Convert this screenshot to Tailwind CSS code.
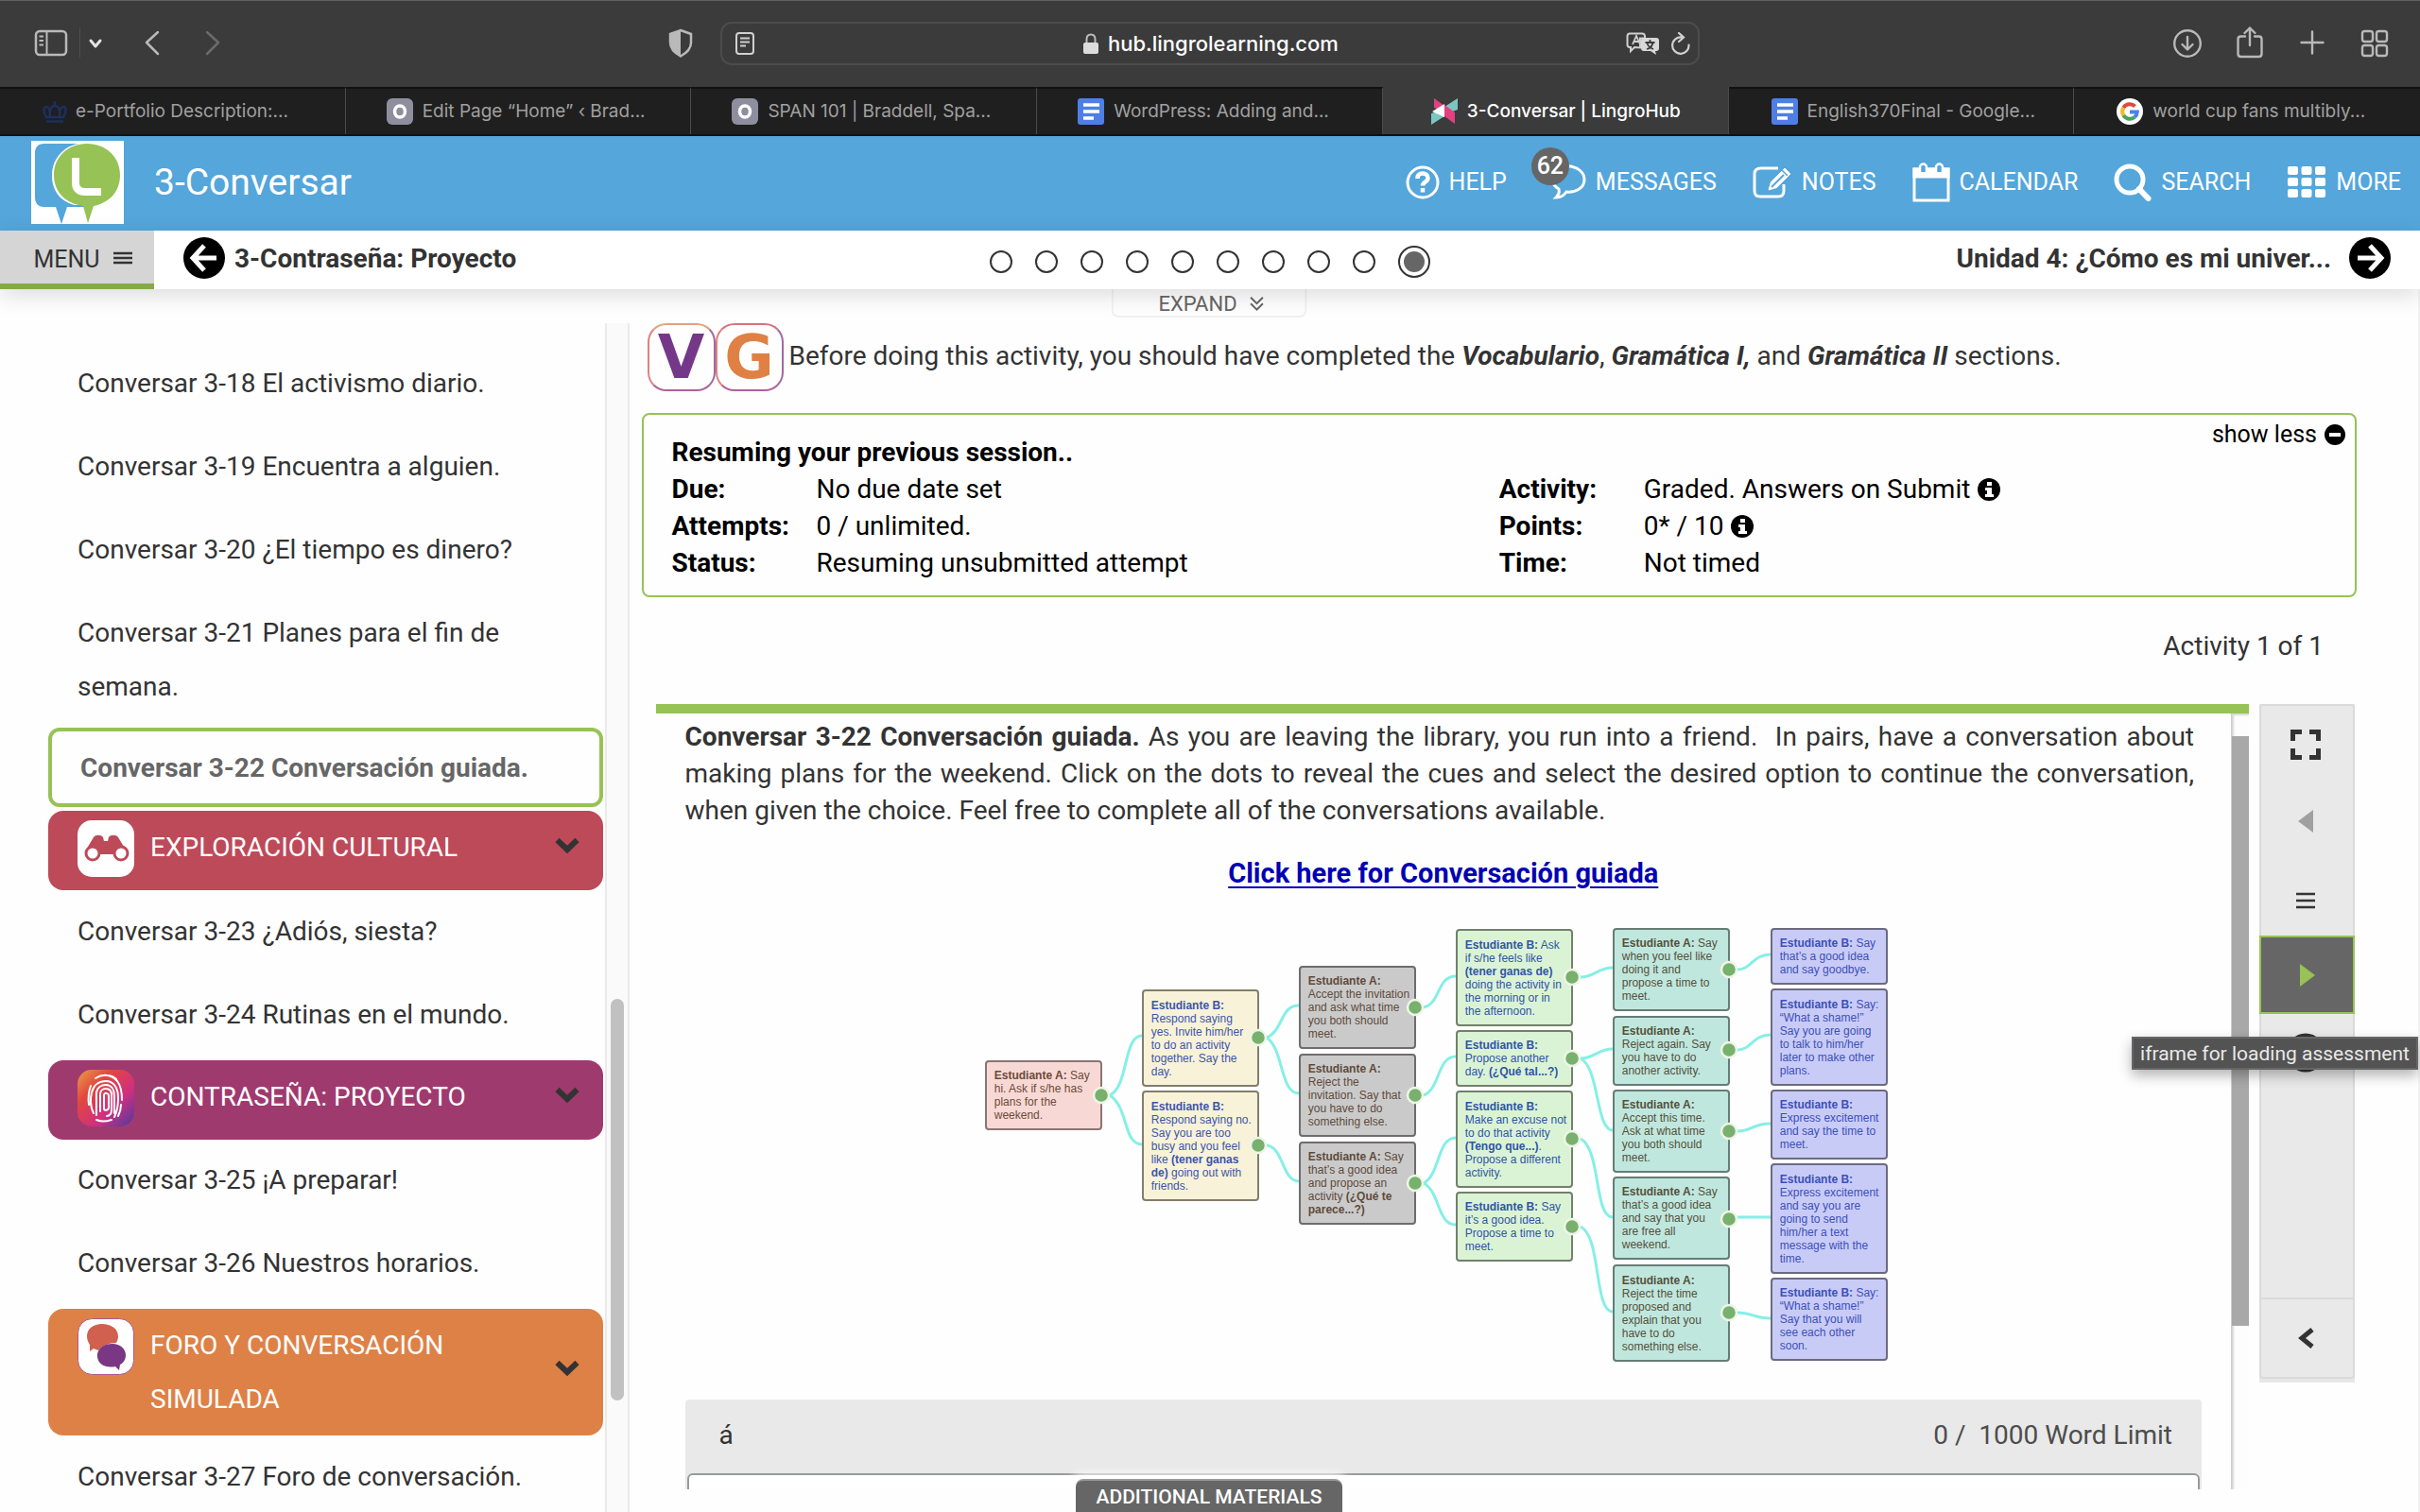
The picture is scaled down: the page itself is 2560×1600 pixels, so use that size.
<!DOCTYPE html>
<html lang="en">
<head>
<meta charset="utf-8">
<meta name="viewport" content="width=device-width, initial-scale=1">
<title>3-Conversar | LingroHub</title>
<script src="https://cdn.jsdelivr.net/npm/@tailwindcss/browser@4"></script>
</head>
<body class="flex h-screen flex-col overflow-hidden bg-[#fefefe] font-['Roboto',sans-serif] text-[28px] leading-[39px] text-[#333333]">

<!-- Browser toolbar -->
<div class="flex h-[92px] shrink-0 items-start justify-between border-t border-[#606060] bg-[#3b3b3b] font-['Inter',sans-serif] text-[#b9b9b9]">
  <div class="flex h-[90px] flex-1 items-start pt-[28px]">
    <button aria-label="Sidebar" class="ml-[36px]"><svg class="h-8 w-9" viewBox="0 0 36 32" fill="none" stroke="currentColor" stroke-width="2.5"><rect x="2" y="4" width="32" height="25" rx="4"/><path d="M13.500 4v25M5.500 9.500h4.500M5.500 14h4.500M5.500 18.500h4.500" stroke-width="2"/></svg></button>
    <div class="ml-3 h-8 w-px bg-[#4d4d4d]"></div>
    <button aria-label="Tab groups" class="ml-2"><svg class="h-8 w-4" viewBox="0 0 16 32" fill="none" stroke="#e4e4e4" stroke-width="3" stroke-linecap="round" stroke-linejoin="round"><path d="M3 14l5 6 5-6"/></svg></button>
    <button aria-label="Back" class="ml-[43px]"><svg class="h-8 w-5" viewBox="0 0 20 32" fill="none" stroke="currentColor" stroke-width="2.5" stroke-linecap="round" stroke-linejoin="round"><path d="M15 5L3 16l12 12"/></svg></button>
    <button aria-label="Forward" class="ml-[42px]"><svg class="h-8 w-5" viewBox="0 0 20 32" fill="none" stroke="#6b6b6b" stroke-width="2.500" stroke-linecap="round" stroke-linejoin="round"><path d="M5 5l12 11L5 28"/></svg></button>
    <button aria-label="Privacy report" class="mr-7 ml-auto"><svg class="h-8 w-7" viewBox="0 0 28 32"><path d="M14 3l11 4v9c0 7-4.500 11-11 14.500C7.500 27 3 23 3 16V7z" fill="none" stroke="currentColor" stroke-width="2.500"/><path d="M14 3v27.500C7.500 27 3 23 3 16V7z" fill="currentColor"/></svg></button>
  </div>
  <div class="mt-[22px] flex h-[46px] w-[1036px] items-center justify-between rounded-xl border-2 border-[#4c4c4c] pr-1.5 pl-3 text-[#e6e6e6]">
    <button aria-label="Reader"><svg class="h-6 w-6" viewBox="0 0 24 24" fill="none" stroke="#d0d0d0" stroke-width="2"><rect x="3" y="1" width="18" height="22" rx="3"/><path d="M7 6.500h10M7 10.500h10M7 14.500h6"/></svg></button>
    <label class="flex items-center gap-2 pl-15"><svg class="h-6 w-5" viewBox="0 0 20 24"><rect x="2" y="11" width="16" height="12" rx="2" fill="#dcdcdc"/><path d="M5.500 11V7.500C5.500 4.500 7 2.500 10 2.500s4.500 2 4.500 5V11" fill="none" stroke="#bcbcbc" stroke-width="2"/></svg><input aria-label="Address" class="w-[264px] bg-transparent text-[22px] leading-[30px] font-medium text-white" value="hub.lingrolearning.com"></label>
    <div class="flex items-center gap-2.5">
      <button aria-label="Translate"><svg class="h-6 w-9" viewBox="0 0 36 24"><path d="M4 1.500h13c2 0 3 1 3 3v2h-5v10l-6-.500-4 4v-4H4c-2 0-2.500-1-2.500-3V4.500c0-2 .500-3 2.500-3z" fill="none" stroke="#d0d0d0" stroke-width="2"/><path d="M7 13l4-9 3.500 8M8.500 10h5" fill="none" stroke="#d0d0d0" stroke-width="1.800"/><path d="M19 6h13c2 0 3 1 3 3v8c0 2-1 3-3 3h-1l1 4-6-4h-7c-2 0-3-1-3-3V9c0-2 1-3 3-3z" fill="#d8d8d8"/><path d="M25.500 8v3M20.500 11h10M22 18c4-1 6-4 6.500-7M22.500 12c1 3 4 5 6.500 6" fill="none" stroke="#3b3b3b" stroke-width="1.800"/></svg></button>
      <button aria-label="Reload"><svg class="h-6 w-6" viewBox="0 0 24 24" fill="none" stroke="#d0d0d0" stroke-width="2.200" stroke-linecap="round"><path d="M20.500 13.500A8.700 8.700 0 1 1 13 5.500M10 1l5 4.500-5 4.500"/></svg></button>
    </div>
  </div>
  <div class="flex flex-1 items-start justify-end gap-7 pt-[26px]">
    <button aria-label="Downloads" class="mr-1"><svg class="h-9 w-9" viewBox="0 0 36 36" fill="none" stroke="currentColor" stroke-width="2.400" stroke-linecap="round" stroke-linejoin="round"><circle cx="18" cy="19" r="13.800"/><path d="M18 12v13M12.500 20l5.500 5.500 5.500-5.500"/></svg></button>
    <button aria-label="Share" class="mr-1.5"><svg class="h-9 w-8" viewBox="0 0 32 36" fill="none" stroke="currentColor" stroke-width="2.400" stroke-linecap="round" stroke-linejoin="round"><path d="M11 11.500H6.500c-2 0-3 1-3 3V30c0 2 1 3 3 3h19c2 0 3-1 3-3V14.500c0-2-1-3-3-3H21M16 21V2.500M10.500 8L16 2.500 21.500 8"/></svg></button>
    <button aria-label="New tab" class="mr-1.5"><svg class="h-9 w-8" viewBox="0 0 32 36" fill="none" stroke="currentColor" stroke-width="2.400" stroke-linecap="round"><path d="M16 6.500v23M4.500 18h23"/></svg></button>
    <button aria-label="Tab overview" class="mr-8"><svg class="h-9 w-8" viewBox="0 0 32 36" fill="none" stroke="currentColor" stroke-width="2.400"><rect x="3" y="6" width="11" height="11" rx="2.500"/><rect x="18" y="6" width="11" height="11" rx="2.500"/><rect x="3" y="21" width="11" height="11" rx="2.500"/><rect x="18" y="21" width="11" height="11" rx="2.500"/></svg></button>
  </div>
</div>

<!-- Tab strip -->
<nav aria-label="Tabs" class="grid h-[52px] shrink-0 grid-cols-7 border-b-2 border-[#111111] bg-[#1f1f1f] font-['Inter',sans-serif] text-[19px] leading-[28px] text-[#a0a0a0]">
  <a href="#" class="flex items-center gap-2 border-t-2 border-r border-t-[#111111] border-r-[#4a4a4a] pl-11 whitespace-nowrap"><svg class="h-7 w-7" viewBox="0 0 28 28" fill="none" stroke="#1d2f5e" stroke-width="2.500"><path d="M5 20C1 14 2 9 5 9s4 4 4 10c-1-7 1-11 5-11s6 4 5 11c0-6 1-10 4-10s4 5 0 11zM5 24.500h18M14 8V3"/></svg>e-Portfolio Description:...</a>
  <a href="#" class="flex items-center gap-2.5 border-t-2 border-r border-t-[#111111] border-r-[#4a4a4a] pl-[43px] whitespace-nowrap"><svg class="h-7 w-7" viewBox="0 0 28 28"><rect width="28" height="28" rx="6" fill="#8f8e9e"/><ellipse cx="14" cy="14" rx="5.500" ry="6" fill="none" stroke="#fff" stroke-width="3.500"/></svg>Edit Page “Home” ‹ Brad...</a>
  <a href="#" class="flex items-center gap-2.5 border-t-2 border-r border-t-[#111111] border-r-[#4a4a4a] pl-[43px] whitespace-nowrap"><svg class="h-7 w-7" viewBox="0 0 28 28"><rect width="28" height="28" rx="6" fill="#8f8e9e"/><ellipse cx="14" cy="14" rx="5.500" ry="6" fill="none" stroke="#fff" stroke-width="3.500"/></svg>SPAN 101 | Braddell, Spa...</a>
  <a href="#" class="flex items-center gap-2.5 border-t-2 border-r border-t-[#111111] border-r-[#4a4a4a] pl-[43px] whitespace-nowrap"><svg class="h-7 w-7" viewBox="0 0 28 28"><rect width="28" height="28" rx="3" fill="#4f7fe6"/><path d="M6 7h17M6 14h17M6 21h11" stroke="#fff" stroke-width="3.500"/></svg>WordPress: Adding and...</a>
  <a href="#" aria-current="page" class="flex items-center gap-2.5 border-r border-[#4a4a4a] bg-[#3b3b3b] pt-0.5 pl-[51px] font-medium whitespace-nowrap text-white"><svg class="h-7 w-7" viewBox="0 0 28 28"><path d="M3 0l11 8v6L3 10z" fill="#e2407f"/><path d="M28 0L14 9v8l14-5z" fill="#7cc5c0"/><path d="M0 28l14-9v-7L0 16z" fill="#7cc5c0"/><path d="M25 27l-11-8V7l11 8z" fill="#e2407f"/><path d="M1 14l13-8v14z" fill="#fff"/></svg>3-Conversar | LingroHub</a>
  <a href="#" class="flex items-center gap-2.5 border-t-2 border-r border-t-[#111111] border-r-[#4a4a4a] pl-[45px] whitespace-nowrap"><svg class="h-7 w-7" viewBox="0 0 28 28"><rect width="28" height="28" rx="3" fill="#4f7fe6"/><path d="M6 7h17M6 14h17M6 21h11" stroke="#fff" stroke-width="3.500"/></svg>English370Final - Google...</a>
  <a href="#" class="flex items-center gap-2.5 border-t-2 border-t-[#111111] pl-[45px] whitespace-nowrap"><svg class="h-7 w-7" viewBox="0 0 28 28" fill="none" stroke-width="4"><circle cx="14" cy="14" r="14" fill="#fff"/><path d="M19.500 8.500A7.800 7.800 0 0 0 7.300 10" stroke="#dd4b3e"/><path d="M7.300 10a7.800 7.800 0 0 0 0 8" stroke="#f2b92c"/><path d="M7.300 18a7.800 7.800 0 0 0 11.700 2" stroke="#4ba35a"/><path d="M19 20a7.800 7.800 0 0 0 2.800-5.500H14" stroke="#4c82e8"/></svg>world cup fans multibly...</a>
</nav>

<!-- Site header -->
<header class="flex h-[100px] shrink-0 items-center bg-[#54a6db] pb-[3px] pl-[33px] text-white">
  <a href="#" aria-label="Lingro home"><svg class="h-[88px] w-[98px]" viewBox="0 0 98 88"><rect width="98" height="88" fill="#fff"/><path d="M14 3h45v67H38l-6 18-6-18H14C6 70 4 65 4 59V13C4 7 7 3 14 3z" fill="#54a6db"/><path d="M59 2C37 2 22 17 22 37c0 16 9 27 24 31h10l4 18 6-18c18-4 29-16 29-32C95 16 80 2 59 2z" fill="#fff"/><path d="M59 3c20 0 35 14 35 33 0 17-10 29-28 33l-6 18-5-18C36 66 24 54 24 36 24 17 39 3 59 3z" fill="#97c255"/><path d="M47 18v27c0 6 4 9 10 9h17" fill="none" stroke="#fff" stroke-width="8"/></svg></a>
  <h1 class="ml-[32px] text-[39px] leading-[44px]">3-Conversar</h1>
  <nav aria-label="Site" class="ml-auto flex items-center gap-[38px] pr-5 text-[25px] leading-[30px]">
    <a href="#" class="-mr-3 flex items-center gap-2.5"><svg class="h-9 w-9" viewBox="0 0 36 36" fill="none" stroke="#fff"><circle cx="18" cy="18" r="16" stroke-width="3"/><path d="M12.500 14c0-4 2.500-5.500 5.500-5.500s5.500 1.800 5.500 5c0 4-5.500 4-5.500 8" stroke-width="4.500"/><path d="M18 24v4.500" stroke-width="4.500"/></svg>HELP</a>
    <a href="#" class="relative flex items-center gap-2.5 pl-[18px]"><svg class="h-10 w-10" viewBox="0 0 40 40" fill="none" stroke="#fff" stroke-width="3"><path d="M24 3c8 2 14 7 14 14 0 9-9 14-19 13-2 3-6 6-11 6 3-3 4-5 3-9-5-3-7-6-7-10C4 9 12 3 20 3z"/></svg>MESSAGES<span class="absolute top-[-17px] left-0 flex h-10 w-10 items-center justify-center rounded-full bg-[#666666] font-medium">62</span></a>
    <a href="#" class="flex items-center gap-2.5"><svg class="h-10 w-[42px]" viewBox="0 0 42 40" fill="none" stroke="#fff" stroke-width="3"><path d="M27 5H9C4 5 2 7 2 11v18c0 4 2 6 6 6h19c4 0 6-2 6-6v-7"/><path d="M17 28l2.500-8.500L34 5l6 6-14.500 14.500z" fill="#fff" stroke-width="1"/><path d="M20 25l13-13" stroke="#54a6db" stroke-width="2"/><path d="M31 7l6 6" stroke="#54a6db" stroke-width="1.500"/></svg>NOTES</a>
    <a href="#" class="flex items-center gap-2.5"><svg class="h-11 w-[40px]" viewBox="0 0 40 44" fill="none" stroke="#fff" stroke-width="3"><path d="M2 8h36v33H2z"/><path d="M2 8h36v8H2z" fill="#fff"/><path d="M8 11V6a3.500 3.500 0 0 1 7 0v5M25 11V6a3.500 3.500 0 0 1 7 0v5" stroke-width="2.500" fill="#54a6db"/></svg>CALENDAR</a>
    <a href="#" class="flex items-center gap-2.5"><svg class="h-10 w-10" viewBox="0 0 40 40" fill="none" stroke="#fff"><circle cx="17" cy="17" r="14" stroke-width="5"/><path d="M27 27l9.500 10" stroke-width="6" stroke-linecap="round"/></svg>SEARCH</a>
    <button class="flex items-center gap-2.5"><svg class="h-9 w-[42px]" viewBox="0 0 42 36" fill="#fff"><rect x="1" y="1" width="11" height="9" rx="2"/><rect x="15.500" y="1" width="11" height="9" rx="2"/><rect x="30" y="1" width="11" height="9" rx="2"/><rect x="1" y="13" width="11" height="9" rx="2"/><rect x="15.500" y="13" width="11" height="9" rx="2"/><rect x="30" y="13" width="11" height="9" rx="2"/><rect x="1" y="25" width="11" height="9" rx="2"/><rect x="15.500" y="25" width="11" height="9" rx="2"/><rect x="30" y="25" width="11" height="9" rx="2"/></svg>MORE</button>
  </nav>
</header>

<!-- Lesson bar -->
<div class="relative z-10 grid h-[62px] shrink-0 grid-cols-[1fr_auto_1fr] bg-white shadow-[0_6px_24px_rgba(0,0,0,0.14)]">
  <div class="flex items-stretch">
    <button class="flex w-[163px] items-center justify-center gap-3.5 border-b-6 border-[#84ab47] bg-[#d5d5d5] pt-1 pl-3 text-[25px]">MENU<svg class="h-5 w-5" viewBox="0 0 20 20" stroke="#333" stroke-width="2.500"><path d="M0 4h20M0 9h20M0 14h20"/></svg></button>
    <a href="#" class="mb-1 ml-[31px] flex items-center gap-2.5 font-bold"><svg class="h-11 w-11" viewBox="0 0 44 44"><circle cx="22" cy="22" r="22" fill="#000"/><path d="M22 9L10 22l12 13M10 22h25" fill="none" stroke="#fff" stroke-width="5"/></svg>3-Contraseña: Proyecto</a>
  </div>
  <div class="flex items-center gap-6 pt-1">
    <button aria-label="Page 1" class="h-6 w-6 rounded-full border-2 border-[#333333]"></button>
    <button aria-label="Page 2" class="h-6 w-6 rounded-full border-2 border-[#333333]"></button>
    <button aria-label="Page 3" class="h-6 w-6 rounded-full border-2 border-[#333333]"></button>
    <button aria-label="Page 4" class="h-6 w-6 rounded-full border-2 border-[#333333]"></button>
    <button aria-label="Page 5" class="h-6 w-6 rounded-full border-2 border-[#333333]"></button>
    <button aria-label="Page 6" class="h-6 w-6 rounded-full border-2 border-[#333333]"></button>
    <button aria-label="Page 7" class="h-6 w-6 rounded-full border-2 border-[#333333]"></button>
    <button aria-label="Page 8" class="h-6 w-6 rounded-full border-2 border-[#333333]"></button>
    <button aria-label="Page 9" class="h-6 w-6 rounded-full border-2 border-[#333333]"></button>
    <button aria-label="Page 10" class="flex h-[34px] w-[34px] items-center justify-center rounded-full border-2 border-[#333333]"><span class="h-[22px] w-[22px] rounded-full bg-[#666666]"></span></button>
  </div>
  <a href="#" class="mr-[31px] mb-1 flex items-center justify-end gap-[19px] font-bold">Unidad 4: ¿Cómo es mi univer...<svg class="h-11 w-11" viewBox="0 0 44 44"><circle cx="22" cy="22" r="22" fill="#000"/><path d="M22 9l12 13-12 13M34 22H9" fill="none" stroke="#fff" stroke-width="5"/></svg></a>
</div>

<div class="relative flex min-h-0 flex-1 border-r-2 border-[#f3f3f3] pt-9">
  <button class="absolute top-0 left-1/2 flex h-[30px] w-[207px] -translate-x-1/2 items-center justify-center gap-3 rounded-b-lg border-2 border-t-0 border-[#f0f0f0] pt-1 pl-1.5 text-[22px] leading-[24px] text-[#666666]">EXPAND<svg class="h-4 w-[18px]" viewBox="0 0 20 20" fill="none" stroke="#666" stroke-width="2.500"><path d="M2 1l8 8 8-8M2 9l8 8 8-8"/></svg></button>

  <!-- Table of contents -->
  <aside class="flex w-1/4 shrink-0 overflow-hidden">
    <ul class="min-w-0 flex-1 pt-5 pr-0.5 pl-[51px] leading-[57px]">
      <li class="pt-[15px] pb-4 pl-[31px]"><a href="#">Conversar 3-18 El activismo diario.</a></li>
      <li class="pt-[15px] pb-4 pl-[31px]"><a href="#">Conversar 3-19 Encuentra a alguien.</a></li>
      <li class="pt-[15px] pb-4 pl-[31px]"><a href="#">Conversar 3-20 ¿El tiempo es dinero?</a></li>
      <li class="pt-[15px] pb-[15px] pl-[31px]"><a href="#">Conversar 3-21 Planes para el fin de<br>semana.</a></li>
      <li class="flex h-[84px] items-center rounded-xl border-4 border-[#97c255] pl-[30px] font-bold text-[#666666]"><a href="#" aria-current="true">Conversar 3-22 Conversación guiada.</a></li>
      <li class="mt-1"><button class="flex h-[84px] w-full items-center rounded-2xl bg-[#bd4a59] pt-2.5 pr-[24px] pb-[14px] pl-[31px] text-left text-white"><svg class="mr-[17px] h-[60px] w-[60px]" viewBox="0 0 60 60"><rect width="60" height="60" rx="15" fill="#fff"/><path d="M8 33l9-15c2-3 8-3 10 0l1 4h4l1-4c2-3 8-3 10 0l9 15v3H8z" fill="#bd4a59"/><circle cx="16" cy="35" r="7" fill="#fff" stroke="#bd4a59" stroke-width="3"/><circle cx="46" cy="35" r="7" fill="#fff" stroke="#bd4a59" stroke-width="3"/><path d="M25 36l3-4h6l3 4z" fill="#bd4a59"/></svg><span class="flex-1 pb-1">EXPLORACIÓN CULTURAL</span><svg class="mb-1.5 h-5 w-7" viewBox="0 0 28 20" fill="none" stroke="#333" stroke-width="6"><path d="M3.500 4L14 14 24.500 4"/></svg></button></li>
      <li class="pt-[15px] pb-4 pl-[31px]"><a href="#">Conversar 3-23 ¿Adiós, siesta?</a></li>
      <li class="pt-[15px] pb-4 pl-[31px]"><a href="#">Conversar 3-24 Rutinas en el mundo.</a></li>
      <li class="mt-1"><button class="flex h-[84px] w-full items-center rounded-2xl bg-[#9f3a6f] pt-2.5 pr-[24px] pb-[14px] pl-[31px] text-left text-white"><svg class="mr-[17px] h-[60px] w-[60px]" viewBox="0 0 60 60"><defs><linearGradient id="fp" x1="0" y1="0" x2="1" y2="1"><stop offset="0" stop-color="#eaa047"/><stop offset=".3" stop-color="#e2473f"/><stop offset=".65" stop-color="#cf2f80"/><stop offset="1" stop-color="#4a3aa0"/></linearGradient></defs><rect width="60" height="60" rx="15" fill="url(#fp)"/><g fill="none" stroke="#fff" stroke-width="2" stroke-linecap="round"><path d="M19 9c8-5 17-4 23 3 4 5 5 12 5 20M31 6c4 0 7 1 10 4M14 17c-2 5-3 12-2 20"/><path d="M17 46c-3-6-4-14-2-22 2-8 8-12 15-12 9 0 13 8 13 18 0 8-1 14-4 20"/><path d="M20 48V24c1-5 5-8 10-8 6 0 9 5 9 12v18"/><path d="M24 44V26c0-4 3-6 6-6 4 0 6 3 6 7v16c0 3-2 6-5 6"/><path d="M28 41V27c0-3 5-3 5 1v12c0 3-5 4-5 1M20 53c4 2 10 2 16 0M46 37c0 5-1 8-3 12"/></g></svg><span class="flex-1 pb-1">CONTRASEÑA: PROYECTO</span><svg class="mb-1.5 h-5 w-7" viewBox="0 0 28 20" fill="none" stroke="#333" stroke-width="6"><path d="M3.500 4L14 14 24.500 4"/></svg></button></li>
      <li class="pt-[14px] pb-4 pl-[31px]"><a href="#">Conversar 3-25 ¡A preparar!</a></li>
      <li class="pt-[15px] pb-4 pl-[31px]"><a href="#">Conversar 3-26 Nuestros horarios.</a></li>
      <li class="mt-1"><button class="flex w-full items-center rounded-2xl bg-[#de8146] py-2.5 pr-[24px] pl-[31px] text-left text-white"><svg class="mr-[17px] h-[60px] w-[60px] self-start" viewBox="0 0 60 60"><rect x=".500" y=".500" width="59" height="59" rx="15" fill="#fff" stroke="#b05a8c"/><path d="M26 6c9 0 17 5 17 13 0 3-1 5-2 7-8 0-15 3-19 8l-5-2-4 3v-7c-2-3-3-6-3-9 0-8 7-13 16-13z" fill="#d2604e"/><path d="M37 27c8 0 14 5 14 12 0 4-2 8-6 10l-1 6-4-4c-10 2-18-2-19-10-1-8 6-14 16-14z" fill="#7a3783"/></svg><span class="flex-1">FORO Y CONVERSACIÓN<br>SIMULADA</span><svg class="mb-2 h-5 w-7" viewBox="0 0 28 20" fill="none" stroke="#333" stroke-width="6"><path d="M3.500 4L14 14 24.500 4"/></svg></button></li>
      <li class="pt-[15px] pb-4 pl-[31px] whitespace-nowrap"><a href="#">Conversar 3-27 Foro de conversación.</a></li>
    </ul>
  </aside>
  <div class="flex w-[26px] shrink-0 flex-col items-center border-x-2 border-[#eaeaea] bg-[#fafafa] pt-[715px]">
    <div class="h-[425px] w-3.5 rounded-full bg-[#c1c1c1]"></div>
  </div>

  <!-- Activity -->
  <main class="flex min-w-0 flex-1 flex-col pr-[65px] pl-[13px]">
    <div class="flex h-[72px] items-center pl-1.5 font-['DejaVu_Sans',sans-serif] text-[64px] leading-[72px] font-bold">
      <span class="flex h-[72px] w-[72px] items-center justify-center rounded-[20px] border-2 border-t-[#e3a277] border-r-[#a06aa0] border-b-[#b0609a] border-l-[#e08080] text-[#753888]">V</span>
      <span class="flex h-[72px] w-[72px] items-center justify-center rounded-[20px] border-2 border-t-[#d87078] border-r-[#a06aa0] border-b-[#b0609a] border-l-[#e08080] text-[#df8145]">G</span>
      <p class="ml-1.5 pb-1 font-['Roboto',sans-serif] text-[28px] leading-[39px] font-normal whitespace-nowrap">Before doing this activity, you should have completed the <b><i>Vocabulario</i></b>, <b><i>Gramática I,</i></b> and <b><i>Gramática II</i></b> sections.</p>
    </div>

    <section class="relative mt-[23px] rounded-lg border-2 border-[#97c255] px-[30px] pt-5 pb-[15px] text-black">
      <h2 class="font-bold">Resuming your previous session..</h2>
      <button class="absolute top-1 right-2.5 flex items-center gap-2 text-[25px] leading-[34px]">show less<svg class="h-[22px] w-[22px]" viewBox="0 0 22 22"><circle cx="11" cy="11" r="11"/><path d="M5 11h12" stroke="#fff" stroke-width="4"/></svg></button>
      <div class="grid grid-cols-2">
        <dl class="grid grid-cols-[153px_1fr]">
          <dt class="font-bold">Due:</dt><dd>No due date set</dd>
          <dt class="font-bold">Attempts:</dt><dd>0 / unlimited.</dd>
          <dt class="font-bold">Status:</dt><dd>Resuming unsubmitted attempt</dd>
        </dl>
        <dl class="grid grid-cols-[153px_1fr]">
          <dt class="font-bold">Activity:</dt><dd class="flex items-center gap-2">Graded. Answers on Submit<svg class="h-6 w-6" viewBox="0 0 24 24"><circle cx="12" cy="12" r="12"/><path d="M10 4h5v4h-5zM8 10h7v7h2v3H8v-3h2v-4H8z" fill="#fff"/></svg></dd>
          <dt class="font-bold">Points:</dt><dd class="flex items-center gap-2">0* / 10<svg class="h-6 w-6" viewBox="0 0 24 24"><circle cx="12" cy="12" r="12"/><path d="M10 4h5v4h-5zM8 10h7v7h2v3H8v-3h2v-4H8z" fill="#fff"/></svg></dd>
          <dt class="font-bold">Time:</dt><dd>Not timed</dd>
        </dl>
      </div>
    </section>

    <p class="mt-8 mr-[35px] text-right">Activity 1 of 1</p>

    <div class="mt-[42px] ml-[15px] flex min-h-0 flex-1 items-start gap-[11px] pr-0.5 pb-6">
      <article class="flex h-full min-w-0 flex-1 flex-col border-t-[10px] border-[#97c255]">
        <div class="flex min-h-0 flex-1">
          <div class="min-w-0 flex-1 overflow-hidden pt-[5px] pr-[31px] pl-[31px]">
            <p class="pr-2 text-justify"><b>Conversar 3-22 Conversación guiada.</b> As you are leaving the library, you run into a friend.&nbsp; In pairs, have a conversation about making plans for the weekend. Click on the dots to reveal the cues and select the desired option to continue the conversation, when given the choice. Feel free to complete all of the conversations available.</p>
            <p class="mt-[28px] text-center text-[29px] font-bold"><a href="#" class="text-[#0000b4] underline decoration-2 underline-offset-4">Click here for Conversación guiada</a></p>

            <!-- Conversation map -->
            <div class="relative mx-auto mt-[38px] h-[458px] w-[970px] font-['Liberation_Sans',sans-serif] text-[12px] leading-[14px] whitespace-nowrap">
              <div class="absolute top-[140px] left-0 flex h-[74px] w-[124px] items-center rounded border-2 border-[#8a7573] bg-[#f8d8d4] pl-2 text-[#6b4a3a]"><p><b>Estudiante A:</b> Say<br>hi. Ask if s/he has<br>plans for the<br>weekend.</p></div>

              <div class="absolute top-[65px] left-[166px] flex h-[103px] w-[124px] items-center rounded border-2 border-[#827e6c] bg-[#f8f2d8] pl-2 text-[#3c55ad]"><p><b>Estudiante B:</b><br>Respond saying<br>yes. Invite him/her<br>to do an activity<br>together. Say the<br>day.</p></div>
              <div class="absolute top-[172px] left-[166px] flex h-[117px] w-[124px] items-center rounded border-2 border-[#827e6c] bg-[#f8f2d8] pl-2 text-[#3c55ad]"><p><b>Estudiante B:</b><br>Respond saying no.<br>Say you are too<br>busy and you feel<br>like <b>(tener ganas<br>de)</b> going out with<br>friends.</p></div>

              <div class="absolute top-[40px] left-[332px] flex h-[88px] w-[124px] items-center rounded border-2 border-[#6e6c6c] bg-[#cbcaca] pl-2 text-[#5d4a3a]"><p><b>Estudiante A:</b><br>Accept the invitation<br>and ask what time<br>you both should<br>meet.</p></div>
              <div class="absolute top-[133px] left-[332px] flex h-[88px] w-[124px] items-center rounded border-2 border-[#6e6c6c] bg-[#cbcaca] pl-2 text-[#5d4a3a]"><p><b>Estudiante A:</b><br>Reject the<br>invitation. Say that<br>you have to do<br>something else.</p></div>
              <div class="absolute top-[226px] left-[332px] flex h-[88px] w-[124px] items-center rounded border-2 border-[#6e6c6c] bg-[#cbcaca] pl-2 text-[#5d4a3a]"><p><b>Estudiante A:</b> Say<br>that’s a good idea<br>and propose an<br>activity <b>(¿Qué te<br>parece...?)</b></p></div>

              <div class="absolute top-[1px] left-[498px] flex h-[103px] w-[124px] items-center rounded border-2 border-[#72806c] bg-[#dbf3d5] pl-2 text-[#2f55a5]"><p><b>Estudiante B:</b> Ask<br>if s/he feels like<br><b>(tener ganas de)</b><br>doing the activity in<br>the morning or in<br>the afternoon.</p></div>
              <div class="absolute top-[108px] left-[498px] flex h-[60px] w-[124px] items-center rounded border-2 border-[#72806c] bg-[#dbf3d5] pl-2 text-[#2f55a5]"><p><b>Estudiante B:</b><br>Propose another<br>day. <b>(¿Qué tal...?)</b></p></div>
              <div class="absolute top-[172px] left-[498px] flex h-[103px] w-[124px] items-center rounded border-2 border-[#72806c] bg-[#dbf3d5] pl-2 text-[#2f55a5]"><p><b>Estudiante B:</b><br>Make an excuse not<br>to do that activity<br><b>(Tengo que...)</b>.<br>Propose a different<br>activity.</p></div>
              <div class="absolute top-[279px] left-[498px] flex h-[74px] w-[124px] items-center rounded border-2 border-[#72806c] bg-[#dbf3d5] pl-2 text-[#2f55a5]"><p><b>Estudiante B:</b> Say<br>it’s a good idea.<br>Propose a time to<br>meet.</p></div>

              <div class="absolute top-0 left-[664px] flex h-[88px] w-[124px] items-center rounded border-2 border-[#667c76] bg-[#c0e7de] pl-2 text-[#55503a]"><p><b>Estudiante A:</b> Say<br>when you feel like<br>doing it and<br>propose a time to<br>meet.</p></div>
              <div class="absolute top-[93px] left-[664px] flex h-[74px] w-[124px] items-center rounded border-2 border-[#667c76] bg-[#c0e7de] pl-2 text-[#55503a]"><p><b>Estudiante A:</b><br>Reject again. Say<br>you have to do<br>another activity.</p></div>
              <div class="absolute top-[171px] left-[664px] flex h-[88px] w-[124px] items-center rounded border-2 border-[#667c76] bg-[#c0e7de] pl-2 text-[#55503a]"><p><b>Estudiante A:</b><br>Accept this time.<br>Ask at what time<br>you both should<br>meet.</p></div>
              <div class="absolute top-[263px] left-[664px] flex h-[88px] w-[124px] items-center rounded border-2 border-[#667c76] bg-[#c0e7de] pl-2 text-[#55503a]"><p><b>Estudiante A:</b> Say<br>that’s a good idea<br>and say that you<br>are free all<br>weekend.</p></div>
              <div class="absolute top-[356px] left-[664px] flex h-[103px] w-[124px] items-center rounded border-2 border-[#667c76] bg-[#c0e7de] pl-2 text-[#55503a]"><p><b>Estudiante A:</b><br>Reject the time<br>proposed and<br>explain that you<br>have to do<br>something else.</p></div>

              <div class="absolute top-0 left-[831px] flex h-[60px] w-[124px] items-center rounded border-2 border-[#6c6a80] bg-[#c9cbf7] pl-2 text-[#3b50b8]"><p><b>Estudiante B:</b> Say<br>that’s a good idea<br>and say goodbye.</p></div>
              <div class="absolute top-[64px] left-[831px] flex h-[103px] w-[124px] items-center rounded border-2 border-[#6c6a80] bg-[#c9cbf7] pl-2 text-[#3b50b8]"><p><b>Estudiante B:</b> Say:<br>“What a shame!”<br>Say you are going<br>to talk to him/her<br>later to make other<br>plans.</p></div>
              <div class="absolute top-[171px] left-[831px] flex h-[74px] w-[124px] items-center rounded border-2 border-[#6c6a80] bg-[#c9cbf7] pl-2 text-[#3b50b8]"><p><b>Estudiante B:</b><br>Express excitement<br>and say the time to<br>meet.</p></div>
              <div class="absolute top-[249px] left-[831px] flex h-[117px] w-[124px] items-center rounded border-2 border-[#6c6a80] bg-[#c9cbf7] pl-2 text-[#3b50b8]"><p><b>Estudiante B:</b><br>Express excitement<br>and say you are<br>going to send<br>him/her a text<br>message with the<br>time.</p></div>
              <div class="absolute top-[370px] left-[831px] flex h-[88px] w-[124px] items-center rounded border-2 border-[#6c6a80] bg-[#c9cbf7] pl-2 text-[#3b50b8]"><p><b>Estudiante B:</b> Say:<br>“What a shame!”<br>Say that you will<br>see each other<br>soon.</p></div>

              <svg class="absolute inset-0 h-full w-full" viewBox="0 0 970 458" fill="none">
                <g stroke="#86efe6" stroke-width="3">
                  <path d="M132 177C152 168 146 114 166 114M132 177C152 190 146 229 166 229"/>
                  <path d="M298 116C316 108 312 82 332 82M298 116C316 128 312 175 332 175M298 230C316 232 314 268 332 268"/>
                  <path d="M464 84C482 80 478 51 498 51M464 177C482 170 478 136 498 136M464 270C482 260 478 222 498 222M464 270C482 280 478 314 498 314"/>
                  <path d="M630 52C645 52 648 42 664 42M630 138C645 138 648 128 664 128M630 138C650 148 646 214 664 214M630 223C652 235 644 306 664 306M630 316C652 326 644 406 664 406"/>
                  <path d="M796 44C811 44 812 28 831 28M796 129C811 129 812 113 831 113M796 215C811 215 812 207 831 207M796 306H831M796 407C811 407 814 413 831 413"/>
                </g>
                <g fill="#78b06e" stroke="#edf5e6" stroke-width="2.500">
                  <circle cx="123" cy="177" r="8"/>
                  <circle cx="289" cy="116" r="8"/><circle cx="289" cy="230" r="8"/>
                  <circle cx="455" cy="84" r="8"/><circle cx="455" cy="177" r="8"/><circle cx="455" cy="270" r="8"/>
                  <circle cx="621" cy="52" r="8"/><circle cx="621" cy="138" r="8"/><circle cx="621" cy="223" r="8"/><circle cx="621" cy="316" r="8"/>
                  <circle cx="787" cy="44" r="8"/><circle cx="787" cy="129" r="8"/><circle cx="787" cy="215" r="8"/><circle cx="787" cy="308" r="8"/><circle cx="787" cy="407" r="8"/>
                </g>
              </svg>
            </div>

            <!-- Answer box -->
            <div class="mt-[41px] rounded-t bg-[#e9e9e9]">
              <div class="flex h-[78px] items-center justify-between pr-[31px] pb-1 pl-[36px]">
                <button>á</button>
                <span class="text-[#4d4d4d]">0 /&nbsp; 1000 Word Limit</span>
              </div>
              <div class="px-0.5"><textarea aria-label="Your answer" class="block h-[200px] w-full resize-none rounded-md border-2 border-[#999b9b] bg-white"></textarea></div>
            </div>
          </div>
          <div class="w-[19px] border-l border-[#cccccc] bg-[#fdfdfd] pt-6 shadow-[inset_2px_2px_2px_rgba(0,0,0,0.15)]">
            <div class="h-[624px] w-full bg-[#a8a8a8]"></div>
          </div>
        </div>
      </article>

      <!-- Activity tools -->
      <div class="relative h-[718px] w-[101px] shrink-0 bg-[#e6e6e6] pb-1">
        <div class="flex h-full flex-col rounded-sm border-2 border-[#dadada] bg-[#e9e9e9]">
          <button aria-label="Full screen" class="flex h-[81px] items-center justify-center pr-1"><svg class="h-8 w-8" viewBox="0 0 32 32" fill="none" stroke="#333" stroke-width="5"><path d="M2.500 12V2.500H12M20 2.500h9.500V12M29.500 20v9.500H20M12 29.500H2.500V20"/></svg></button>
          <button aria-label="Previous" disabled class="flex h-[81px] items-center justify-center pr-1"><svg class="h-6 w-4" viewBox="0 0 16 24" fill="#a0a0a0"><path d="M16 0v24L0 12z"/></svg></button>
          <button aria-label="Outline" class="flex h-[81px] items-center justify-center pt-1 pr-1"><svg class="h-5 w-5" viewBox="0 0 20 20" stroke="#333" stroke-width="2.500"><path d="M0 4h20M0 11h20M0 18h20"/></svg></button>
          <button aria-label="Next" class="-mx-0.5 flex h-[83px] items-center justify-center border-2 border-[#97c255] bg-[#666666]"><svg class="h-6 w-4" viewBox="0 0 16 24" fill="#97c255"><path d="M0 0v24l16-12z"/></svg></button>
          <button aria-label="Record" class="flex h-[81px] items-center justify-center pr-1"><svg class="h-[42px] w-[42px]" viewBox="0 0 42 42" fill="none" stroke="#333" stroke-width="5"><circle cx="21" cy="21" r="18"/></svg></button>
          <button aria-label="Collapse" class="mt-auto flex h-[84px] items-center justify-center border-t-2 border-[#dadada] pr-1"><svg class="h-6 w-5" viewBox="0 0 20 24" fill="none" stroke="#333" stroke-width="5"><path d="M17 3L6 12l11 9"/></svg></button>
        </div>
        <div role="tooltip" class="absolute top-[352px] -right-[67px] flex h-[35px] w-[303px] items-center justify-center border-2 border-[#666666] bg-[#535353] text-[21px] leading-[28px] whitespace-nowrap text-[#e8e8e8] shadow-[0_6px_14px_rgba(0,0,0,0.3)]">iframe for loading assessment</div>
      </div>
    </div>
  </main>

  <button class="absolute bottom-0 left-1/2 flex h-[35px] w-[282px] -translate-x-1/2 items-center justify-center rounded-t-lg border-t-2 border-[#999999] bg-[#666666] text-[21px] leading-[30px] font-medium text-white shadow-[0_0_10px_6px_rgba(255,255,255,0.9)]">ADDITIONAL MATERIALS</button>
</div>
</body>
</html>
